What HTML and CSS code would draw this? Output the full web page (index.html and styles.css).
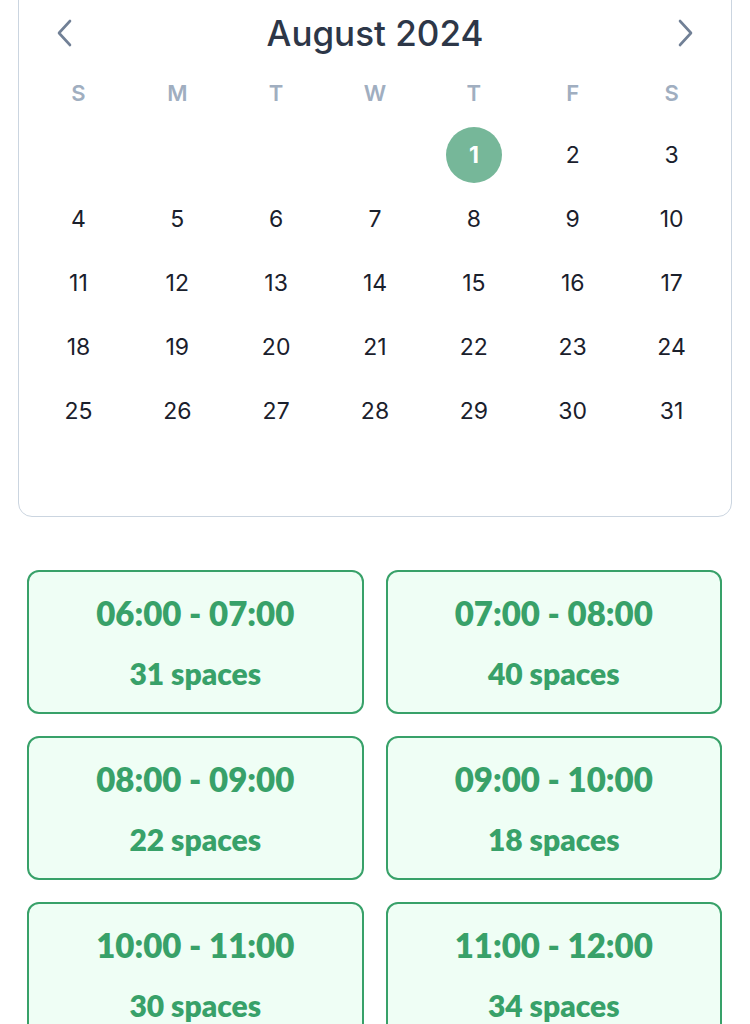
FILE: index.html
```html
<!DOCTYPE html>
<html lang="en">
<head>
  <meta charset="UTF-8" />
  <meta name="viewport" content="width=device-width, initial-scale=1.0"/>
  <title>Book a slot</title>
  <link rel="stylesheet" href="styles.css">
</head>
<body>
  <div class="page">
    <div class="calendar">
      <div class="cal-head">
        <button class="nav">
          <svg width="18" height="28" viewBox="0 0 18 28"><path d="M15 2 L4 14 L15 26" fill="none" stroke="#718096" stroke-width="2.6" stroke-linecap="round" stroke-linejoin="round"/></svg>
        </button>
        <h2>August 2024</h2>
        <button class="nav">
          <svg width="18" height="28" viewBox="0 0 18 28"><path d="M3 2 L14 14 L3 26" fill="none" stroke="#718096" stroke-width="2.6" stroke-linecap="round" stroke-linejoin="round"/></svg>
        </button>
      </div>
      <div class="days">
        <div class="wd">S</div><div class="wd">M</div><div class="wd">T</div><div class="wd">W</div><div class="wd">T</div><div class="wd">F</div><div class="wd">S</div>

        <div class="day"></div><div class="day"></div><div class="day"></div><div class="day"></div>
        <div class="day"><span class="selected">1</span></div><div class="day">2</div><div class="day">3</div>

        <div class="day">4</div><div class="day">5</div><div class="day">6</div><div class="day">7</div><div class="day">8</div><div class="day">9</div><div class="day">10</div>
        <div class="day">11</div><div class="day">12</div><div class="day">13</div><div class="day">14</div><div class="day">15</div><div class="day">16</div><div class="day">17</div>
        <div class="day">18</div><div class="day">19</div><div class="day">20</div><div class="day">21</div><div class="day">22</div><div class="day">23</div><div class="day">24</div>
        <div class="day">25</div><div class="day">26</div><div class="day">27</div><div class="day">28</div><div class="day">29</div><div class="day">30</div><div class="day">31</div>
        <div class="day"></div>
      </div>
    </div>

    <div class="slots">
      <div class="slot"><div class="time">06:00 - 07:00</div><div class="spaces">31 spaces</div></div>
      <div class="slot"><div class="time">07:00 - 08:00</div><div class="spaces">40 spaces</div></div>
      <div class="slot"><div class="time">08:00 - 09:00</div><div class="spaces">22 spaces</div></div>
      <div class="slot"><div class="time">09:00 - 10:00</div><div class="spaces">18 spaces</div></div>
      <div class="slot"><div class="time">10:00 - 11:00</div><div class="spaces">30 spaces</div></div>
      <div class="slot"><div class="time">11:00 - 12:00</div><div class="spaces">34 spaces</div></div>
    </div>
  </div>
</body>
</html>
```

FILE: styles.css
```css
body {
  margin: 0;
  background: #ffffff;
  font-family: 'Inter', sans-serif;
  overflow: hidden;
}
.page {
  padding: 0 18px;
}
.calendar {
  margin-top: -20px;
  border: 1.5px solid #cbd5e0;
  border-radius: 14px;
  padding: 18px 10px 9px;
}
.cal-head {
  display: flex;
  align-items: center;
  justify-content: space-between;
  height: 68px;
  padding: 0 26px 0 26px;
}
.cal-head h2 {
  margin: 0;
  font-size: 35px;
  font-weight: 500;
  color: #2d3748;
}
.nav {
  background: none;
  border: none;
  padding: 0;
  display: flex;
  cursor: pointer;
}
.days {
  display: grid;
  grid-template-columns: repeat(7, 1fr);
  grid-template-rows: 56px;
  grid-auto-rows: 64px;
}
.wd {
  display: flex;
  align-items: center;
  justify-content: center;
  font-size: 22px;
  font-weight: 600;
  color: #a0aec0;
  padding-bottom: 4px;
}
.day {
  display: flex;
  align-items: center;
  justify-content: center;
  font-size: 23px;
  color: #1a202c;
}
.selected {
  width: 56px;
  height: 56px;
  border-radius: 50%;
  background: #76b799;
  color: white;
  font-weight: 700;
  display: flex;
  align-items: center;
  justify-content: center;
}
.slots {
  display: grid;
  grid-template-columns: 1fr 1fr;
  gap: 22px;
  margin-top: 53px;
  padding: 0 10px 0 9px;
}
.slot {
  box-sizing: border-box;
  height: 144px;
  border: 2px solid #38a169;
  border-radius: 12px;
  background: #effef5;
  color: #38a169;
  font-family: 'Lato', sans-serif;
  font-weight: 800;
  text-align: center;
}
.time {
  font-size: 33px;
  margin-top: 21px;
}
.spaces {
  font-size: 30px;
  margin-top: 22px;
}
```
